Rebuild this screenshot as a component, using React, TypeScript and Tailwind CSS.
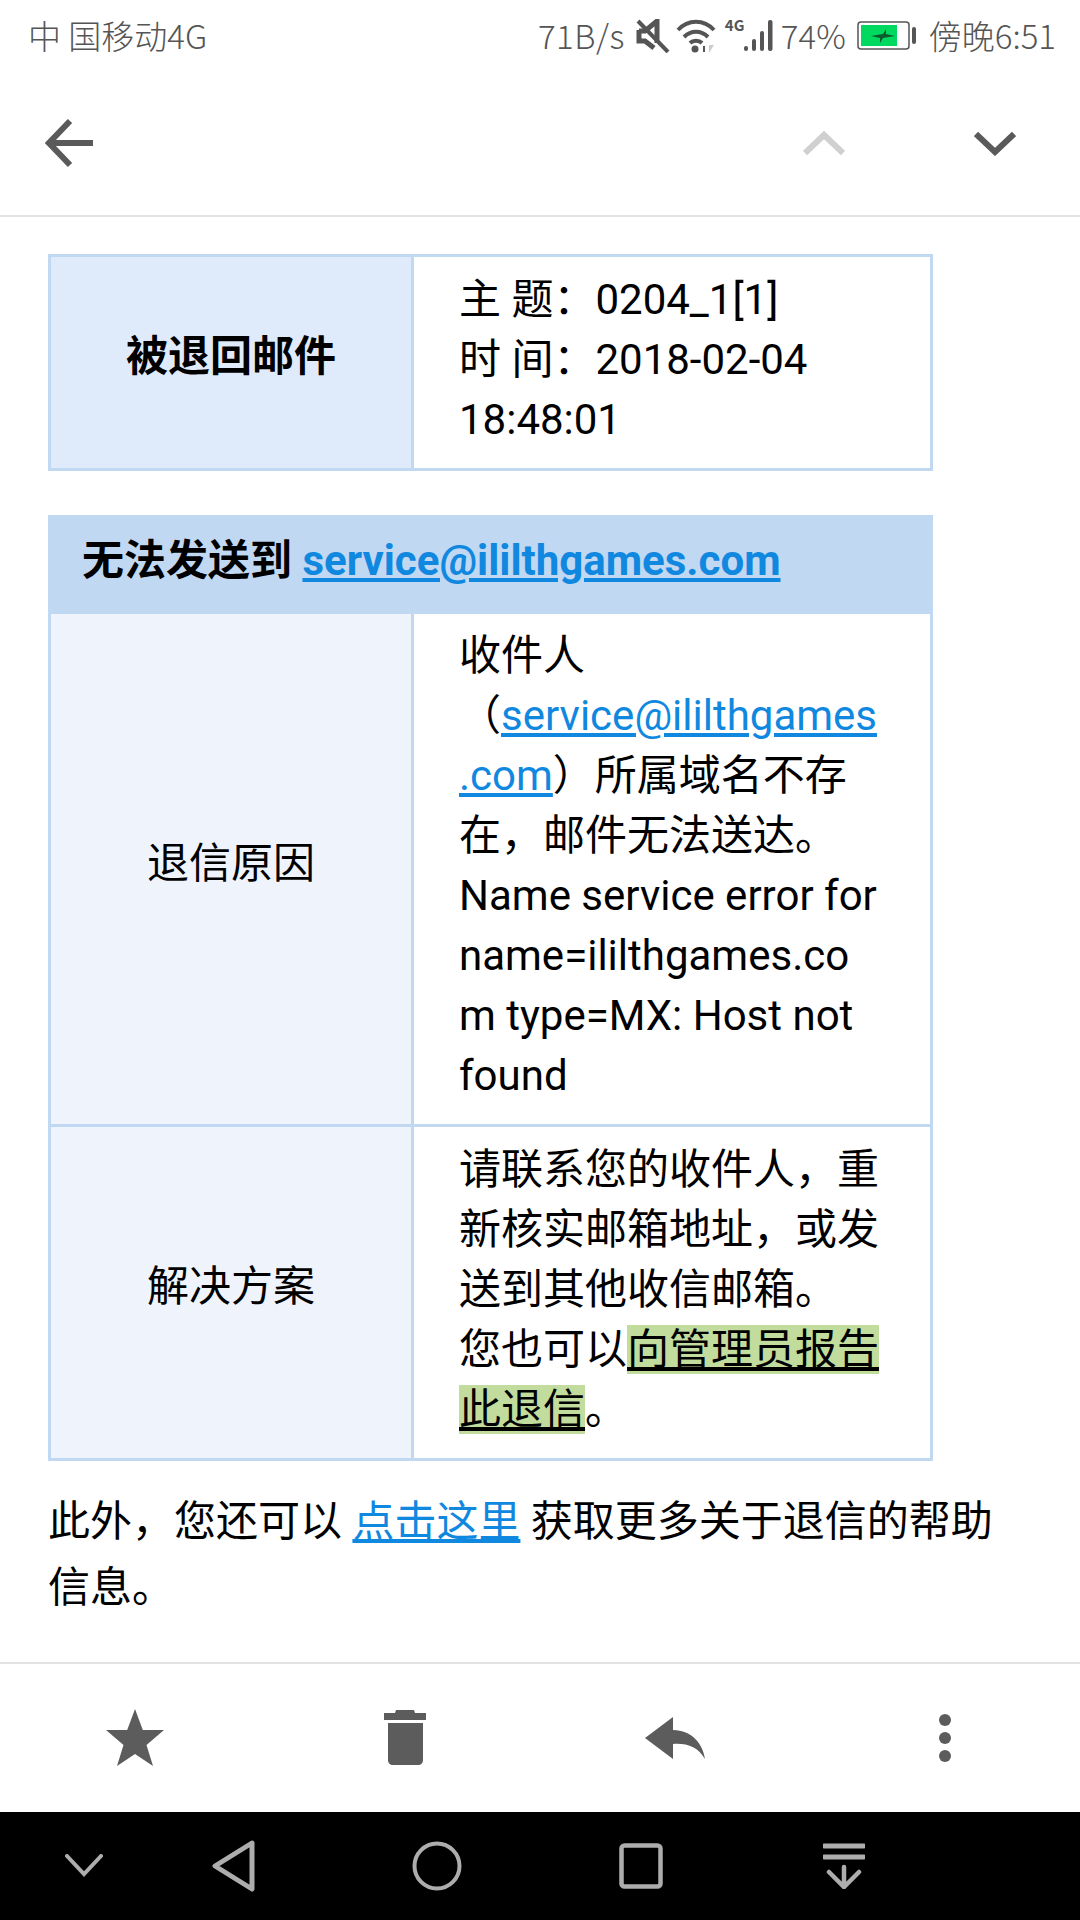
const font = { fontFamily: '"Roboto","Noto Sans CJK SC",sans-serif' };

function Line({ children }: { children: React.ReactNode }) {
  return <div className="whitespace-nowrap">{children}</div>;
}

function StatusBar() {
  return (
    <div className="flex h-[72px] items-center justify-between pl-[28px] pr-[24px] text-[33px] font-light text-[#555]" style={{ fontFamily: '"Noto Sans CJK SC",sans-serif' }}>
      <span>中 国移动4G</span>
      <div className="flex items-center">
        <span className="tracking-[0.5px]">71B/s</span>
        <svg width="34" height="34" viewBox="0 0 34 34" className="ml-[11px]" fill="none">
          <path d="M3 12h6l12-10v22" fill="none" stroke="#555" strokeWidth="5" />
          <path d="M3 11v11h6l9 7" stroke="#555" strokeWidth="5" />
          <path d="M2 2l30 31" stroke="#555" strokeWidth="4" />
        </svg>
        <svg width="40" height="36" viewBox="0 0 40 36" className="ml-[6px]" fill="none">
          <path d="M2 12C12 1 28 1 38 12" stroke="#555" strokeWidth="4" />
          <path d="M8 19c7-7 17-7 24 0" stroke="#555" strokeWidth="4" />
          <path d="M14 25c3-3 9-3 12 0" stroke="#555" strokeWidth="4" />
          <circle cx="19" cy="31" r="3.5" fill="#555" />
          <path d="M27 28v6h2v-6z" fill="#555" />
          <path d="M33 27v8l5-8z" fill="#ccc" />
        </svg>
        <div className="relative ml-[9px] h-[36px] w-[56px]">
          <span className="absolute left-0 top-[-2px] text-[15px] font-bold leading-[18px]">4G</span>
          <svg width="56" height="36" viewBox="0 0 56 36" fill="#555">
            <rect x="19" y="28" width="4" height="5" rx="2" />
            <rect x="27" y="21" width="4" height="12" rx="2" />
            <rect x="35" y="13" width="4" height="20" rx="2" />
            <rect x="43" y="2" width="4.500" height="31" rx="2" />
          </svg>
        </div>
        <span>74%</span>
        <svg width="60" height="30" viewBox="0 0 60 30" className="ml-[11px]" fill="none">
          <rect x="1" y="1" width="51" height="27" rx="3" stroke="#555" strokeWidth="1.5" />
          <rect x="4" y="4" width="36" height="21" fill="#00d95f" />
          <path d="M14 15l12-2 3-5v5l9 2-12 2-3 5v-5z" fill="#0b5a2c" />
          <rect x="55" y="6" width="4" height="17" rx="2" fill="#555" />
        </svg>
        <span className="ml-[12px]">傍晚6:51</span>
      </div>
    </div>
  );
}

function Header() {
  return (
    <div className="flex h-[145px] items-center border-b-2 border-[#e2e2e2] pb-[2px]">
      <svg width="48" height="50" viewBox="0 0 48 50" className="ml-[45px]" fill="none">
        <path d="M48 25H5" stroke="#5a5a5a" strokeWidth="6" />
        <path d="M25 3L4 25l21 22" stroke="#5a5a5a" strokeWidth="6" />
      </svg>
      <div className="flex-1" />
      <svg width="42" height="26" viewBox="0 0 42 26" className="mr-[129px]" fill="none">
        <path d="M2 23L21 5l19 18" stroke="#d0d0d0" strokeWidth="6" />
      </svg>
      <svg width="42" height="26" viewBox="0 0 42 26" className="mr-[64px]" fill="none">
        <path d="M2 4l19 18L40 4" stroke="#5a5a5a" strokeWidth="6" />
      </svg>
    </div>
  );
}

function Body() {
  return (
    <div className="flex-1 pl-[48px] pt-[37px] text-[42px] leading-[60px] text-black" style={font}>
      <div className="flex w-[885px] border-[3px] border-[#c1d8f3]">
        <div className="flex w-[360px] items-center justify-center bg-[#dfebfa] pb-[12px] font-bold">被退回邮件</div>
        <div className="flex-1 border-l-[3px] border-[#c1d8f3] pb-[18px] pl-[45px] pt-[13px]">
          <Line>主 题：0204_1[1]</Line>
          <Line>时 间：2018-02-04</Line>
          <Line>18:48:01</Line>
        </div>
      </div>

      <div className="mt-[44px] w-[885px] border-x-[3px] border-b-[3px] border-[#c1d8f3]">
        <div className="-mx-[3px] flex h-[99px] items-center bg-[#c1d8f3] pb-[7px] pl-[34px] font-bold">
          <span>无法发送到&nbsp;</span>
          <a className="text-[#1188e0] underline">service@ililthgames.com</a>
        </div>
        <div className="flex border-b-[3px] border-[#c1d8f3]">
          <div className="flex w-[360px] items-center justify-center bg-[#eff4fc] pb-[10px]">退信原因</div>
          <div className="flex-1 border-l-[3px] border-[#c1d8f3] pb-[18px] pl-[45px] pt-[12px]">
            <Line>收件人</Line>
            <Line>（<a className="text-[#1188e0] underline">service@ililthgames</a></Line>
            <Line><a className="text-[#1188e0] underline">.com</a>）所属域名不存</Line>
            <Line>在，邮件无法送达。</Line>
            <Line>Name service error for</Line>
            <Line>name=ililthgames.co</Line>
            <Line>m type=MX: Host not</Line>
            <Line>found</Line>
          </div>
        </div>
        <div className="flex">
          <div className="flex w-[360px] items-center justify-center bg-[#eff4fc] pb-[12px]">解决方案</div>
          <div className="flex-1 border-l-[3px] border-[#c1d8f3] pb-[18px] pl-[45px] pt-[13px]">
            <Line>请联系您的收件人，重</Line>
            <Line>新核实邮箱地址，或发</Line>
            <Line>送到其他收信邮箱。</Line>
            <Line>您也可以<a className="bg-[#c1dc9c] underline">向管理员报告</a></Line>
            <Line><a className="bg-[#c1dc9c] underline">此退信</a>。</Line>
          </div>
        </div>
      </div>

      <div className="mt-[28px] w-[960px] leading-[66px]">
        <Line>此外，您还可以 <a className="text-[#1188e0] underline">点击这里</a> 获取更多关于退信的帮助</Line>
        <Line>信息。</Line>
      </div>
    </div>
  );
}

function BottomBar() {
  return (
    <div className="grid h-[150px] grid-cols-4 items-center border-t-2 border-[#e2e2e2]">
      <div className="flex justify-center">
        <svg width="60" height="58" viewBox="0 0 60 58" fill="#5c5c5c">
          <path d="M30 0l7.8 21H59L41.5 36 48 57 30 45 12 57l6.500-21L1 21h21.200z" />
        </svg>
      </div>
      <div className="flex justify-center">
        <svg width="42" height="56" viewBox="0 0 42 56" fill="#5c5c5c">
          <path d="M12 0h18l1 3h11v7H0V3h11z" />
          <path d="M4 13h35v37c0 3-2 5-5 5H9c-3 0-5-2-5-5z" />
        </svg>
      </div>
      <div className="flex justify-center">
        <svg width="62" height="44" viewBox="0 0 62 44" fill="#5c5c5c">
          <path d="M29 1L1 22l28 21V28c14-1 25 3 32 15C59 28 48 14 29 14z" />
        </svg>
      </div>
      <div className="flex flex-col items-center gap-[6px]">
        <div className="h-[12px] w-[12px] rounded-full bg-[#5c5c5c]" />
        <div className="h-[12px] w-[12px] rounded-full bg-[#5c5c5c]" />
        <div className="h-[12px] w-[12px] rounded-full bg-[#5c5c5c]" />
      </div>
    </div>
  );
}

function NavBar() {
  return (
    <div className="flex h-[108px] items-center bg-black">
      <svg width="38" height="24" viewBox="0 0 38 24" className="ml-[65px]" fill="none">
        <path d="M2 2l17 18L36 2" stroke="#adadad" strokeWidth="4" strokeLinecap="round" />
      </svg>
      <svg width="44" height="52" viewBox="0 0 44 52" className="ml-[109px]" fill="none">
        <path d="M40 3L3 26l37 23z" stroke="#adadad" strokeWidth="5" strokeLinejoin="round" />
      </svg>
      <svg width="50" height="50" viewBox="0 0 50 50" className="ml-[156px]" fill="none">
        <circle cx="25" cy="25" r="22.500" stroke="#adadad" strokeWidth="4" />
      </svg>
      <svg width="44" height="46" viewBox="0 0 44 46" className="ml-[157px]" fill="none">
        <rect x="2.500" y="2.500" width="39" height="41" rx="3" stroke="#adadad" strokeWidth="4.500" />
      </svg>
      <svg width="42" height="46" viewBox="0 0 42 46" className="ml-[160px]" fill="none">
        <path d="M1 3h40M1 14h40" stroke="#adadad" strokeWidth="5" strokeLinecap="round" />
        <path d="M21 24v20M6 29l15 15 15-15" stroke="#adadad" strokeWidth="4.500" strokeLinecap="round" />
      </svg>
    </div>
  );
}

export default function App() {
  return (
    <div className="flex h-[1920px] w-[1080px] flex-col overflow-hidden bg-white">
      <StatusBar />
      <Header />
      <Body />
      <BottomBar />
      <NavBar />
    </div>
  );
}
